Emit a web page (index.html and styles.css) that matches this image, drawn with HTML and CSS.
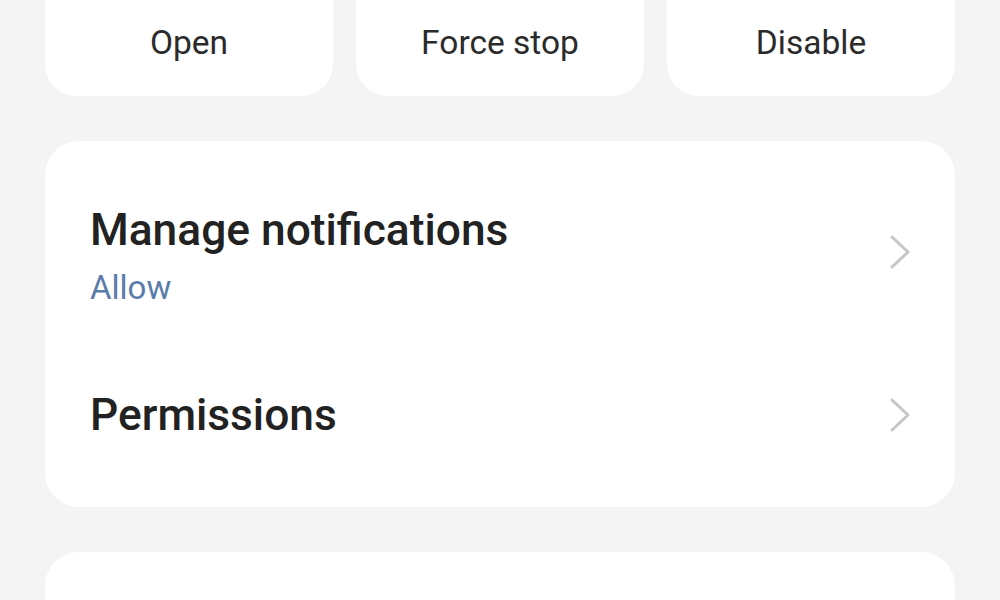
FILE: index.html
```html
<!DOCTYPE html>
<html lang="en">
<head>
    <meta charset="UTF-8">
    <meta name="viewport" content="width=device-width, initial-scale=1.0">
    <title>App info</title>
    <link rel="stylesheet" href="styles.css">
</head>
<body>
    <div class="actions">
        <button class="action">Open</button>
        <button class="action">Force stop</button>
        <button class="action">Disable</button>
    </div>

    <div class="card">
        <div class="row row-tall">
            <div class="row-text row-text-pad">
                <div class="row-title">Manage notifications</div>
                <div class="row-sub">Allow</div>
            </div>
            <svg class="chevron" width="26" height="36" viewBox="0 0 26 36">
                <path d="M5 3 L21 18 L5 33" fill="none" stroke="#c6c6c6" stroke-width="3" stroke-linecap="round" stroke-linejoin="round"/>
            </svg>
        </div>
        <div class="row row-short">
            <div class="row-text">
                <div class="row-title">Permissions</div>
            </div>
            <svg class="chevron" width="26" height="36" viewBox="0 0 26 36">
                <path d="M5 3 L21 18 L5 33" fill="none" stroke="#c6c6c6" stroke-width="3" stroke-linecap="round" stroke-linejoin="round"/>
            </svg>
        </div>
    </div>

    <div class="card card-next"></div>
</body>
</html>
```

FILE: styles.css
```css
body {
    margin: 0;
    background: #f4f4f4;
    font-family: Roboto, "Liberation Sans", sans-serif;
    color: #222;
    overflow: hidden;
}
.actions {
    display: flex;
    gap: 23px;
    margin: -40px 45px 0;
}
.action {
    flex: 1;
    height: 136px;
    padding: 28px 0 0;
    border: none;
    border-radius: 32px;
    background: white;
    font-family: inherit;
    font-size: 33.5px;
    color: #2b2b2b;
}
.card {
    margin: 45px 45px 0;
    background: white;
    border-radius: 34px;
    padding: 0 0 40px;
}
.row {
    display: flex;
    align-items: center;
    padding: 0 42px 0 45px;
}
.row-tall {
    height: 222px;
}
.row-short {
    height: 104px;
}
.row-text {
    flex: 1;
}
.row-text-pad {
    padding-top: 8px;
}
.row-title {
    font-size: 44.3px;
    font-weight: 500;
    color: #222;
    line-height: 1.15;
}
.row-sub {
    font-size: 33px;
    color: #5b7cab;
    margin-top: 13px;
}
.card-next {
    height: 100px;
    padding: 0;
}
```
